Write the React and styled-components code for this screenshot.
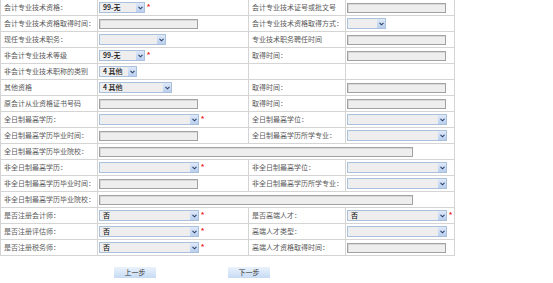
import React from 'react';
import styled, { createGlobalStyle } from 'styled-components';

const GlobalStyle = createGlobalStyle`
  html, body {
    margin: 0;
    padding: 0;
    background: #fff;
  }
  body {
    font-family: "Noto Sans CJK SC", "Liberation Sans", sans-serif;
  }
`;

const Page = styled.div`
  width: 553px;
  height: 283px;
  overflow: hidden;
`;

const Table = styled.table`
  margin-top: -1px;
  width: 454px;
  table-layout: fixed;
  border-collapse: collapse;
  border: 1px solid #d4d4d4;
`;

const Cell = styled.td`
  height: 15px;
  padding: 0 0 0 ${(p) => (p.$label ? 3 : 1)}px;
  border: 1px solid #d4d4d4;
  font-size: 7px;
  line-height: 15px;
  color: #5a5a5a;
  white-space: nowrap;
  overflow: hidden;
  vertical-align: middle;
`;

const Field = styled.div`
  display: flex;
  align-items: center;
  gap: 2px;
`;

const TextBox = styled.div`
  box-sizing: border-box;
  width: ${(p) => p.$w}px;
  height: 10px;
  border: 1px solid #a2a2a2;
  background: #eeeeee;
  box-shadow: inset 1px 1px 0 #d8d8d8;
`;

const SelectBox = styled.div`
  box-sizing: border-box;
  width: ${(p) => p.$w}px;
  height: 11px;
  display: flex;
  border: 1px solid #a9c1dd;
  background: #eeeeee;
`;

const SelectText = styled.span`
  flex: 1;
  padding-left: 3px;
  font-size: 7px;
  line-height: 9px;
  color: #111;
  font-weight: 500;
`;

const Arrow = styled.span`
  width: 8px;
  height: 9px;
  display: flex;
  align-items: center;
  justify-content: center;
  background: linear-gradient(#dfe9f8, #b9cfee);
`;

const Star = styled.span`
  align-self: flex-start;
  margin-top: 1px;
  color: #ee2222;
  font-family: "Liberation Sans", sans-serif;
  font-weight: bold;
  font-size: 8px;
  line-height: 7px;
`;

const Buttons = styled.div`
  display: flex;
  gap: 72px;
  padding: 11px 0 0 114px;
`;

const Button = styled.button`
  width: 42px;
  height: 11px;
  padding: 0;
  border: none;
  background: linear-gradient(#eaf2fc, #c6dbf4);
  font-family: "Noto Sans CJK SC", sans-serif;
  font-size: 7px;
  line-height: 11px;
  color: #333;
`;

function Chevron() {
  return (
    <svg width="5" height="4" viewBox="0 0 5 4">
      <path d="M0.5 0.8 L2.5 2.8 L4.5 0.8" fill="none" stroke="#2d3f66" strokeWidth="1.1" />
    </svg>
  );
}

function Select({ w, value, req }) {
  return (
    <Field>
      <SelectBox $w={w}>
        <SelectText>{value}</SelectText>
        <Arrow>
          <Chevron />
        </Arrow>
      </SelectBox>
      {req && <Star>*</Star>}
    </Field>
  );
}

function Input({ w = 99 }) {
  return (
    <Field>
      <TextBox $w={w} />
    </Field>
  );
}

const inp = { t: 'input' };
const sel = (w, value = '', req = false) => ({ t: 'select', w, value, req });

const rows = [
  ['会计专业技术资格：', sel(46, '99-无', true), '会计专业技术证号或批文号', inp],
  ['会计专业技术资格取得时间：', inp, '会计专业技术资格取得方式：', sel(39)],
  ['现任专业技术职务：', sel(67), '专业技术职务聘任时间', inp],
  ['非会计专业技术等级', sel(46, '99-无', true), '取得时间：', inp],
  ['非会计专业技术职称的类别', sel(38, '4 其他'), '', null],
  ['其他资格', sel(73, '4 其他'), '取得时间：', inp],
  ['原会计从业资格证书号码', inp, '取得时间：', inp],
  ['全日制最高学历：', sel(100, '', true), '全日制最高学位：', sel(100)],
  ['全日制最高学历毕业时间：', inp, '全日制最高学历所学专业：', sel(100)],
  ['全日制最高学历毕业院校：', { t: 'wide' }],
  ['非全日制最高学历：', sel(100, '', true), '非全日制最高学位：', sel(100)],
  ['非全日制最高学历毕业时间：', inp, '非全日制最高学历所学专业：', sel(100)],
  ['非全日制最高学历毕业院校：', { t: 'wide' }],
  ['是否注册会计师：', sel(100, '否', true), '是否高端人才：', sel(100, '否', true)],
  ['是否注册评估师：', sel(100, '否', true), '高端人才类型：', sel(100)],
  ['是否注册税务师：', sel(100, '否', true), '高端人才资格取得时间：', inp],
];

function Control({ c }) {
  if (!c) return null;
  if (c.t === 'input') return <Input />;
  if (c.t === 'wide') return <Input w={314} />;
  return <Select w={c.w} value={c.value} req={c.req} />;
}

export default function App() {
  return (
    <Page>
      <GlobalStyle />
      <Table>
        <colgroup>
          <col style={{ width: 97 }} />
          <col style={{ width: 151 }} />
          <col style={{ width: 97 }} />
          <col style={{ width: 109 }} />
        </colgroup>
        <tbody>
          {rows.map((r, i) => (
            <tr key={i}>
              <Cell $label>{r[0]}</Cell>
              {r[1].t === 'wide' ? (
                <Cell colSpan={3}>
                  <Control c={r[1]} />
                </Cell>
              ) : (
                <>
                  <Cell>
                    <Control c={r[1]} />
                  </Cell>
                  <Cell $label>{r[2]}</Cell>
                  <Cell>
                    <Control c={r[3]} />
                  </Cell>
                </>
              )}
            </tr>
          ))}
        </tbody>
      </Table>
      <Buttons>
        <Button>上一步</Button>
        <Button>下一步</Button>
      </Buttons>
    </Page>
  );
}
